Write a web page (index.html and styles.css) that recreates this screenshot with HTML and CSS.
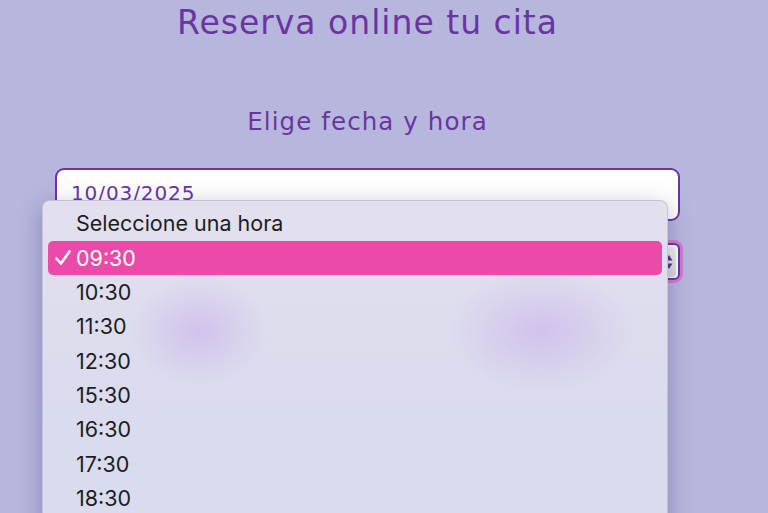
FILE: index.html
```html
<!DOCTYPE html>
<html lang="es">
<head>
<meta charset="utf-8">
<title>Reserva online tu cita</title>
<link rel="stylesheet" href="styles.css">
</head>
<body>
<main class="page">
  <h1 class="title">Reserva online tu cita</h1>
  <h2 class="subtitle">Elige fecha y hora</h2>
  <form class="form">
    <div class="field date-field">10/03/2025</div>
    <div class="field select-field">
      <span class="select-value">09:30</span>
      <span class="stepper">
        <svg width="8" height="18" viewBox="0 0 8 18"><path d="M4 2 L7.5 7.5 H0.5 Z" fill="#5a2e90"/><path d="M4 16 L7.5 10.5 H0.5 Z" fill="#5a2e90"/></svg>
      </span>
    </div>
  </form>
  <div class="menu">
    <div class="option">Seleccione una hora</div>
    <div class="option selected">
      <svg class="check" width="18" height="18" viewBox="0 0 18 18"><path d="M2.5 9.5 L7 14.5 L15.5 2.5" fill="none" stroke="#fff" stroke-width="2.6" stroke-linecap="round" stroke-linejoin="round"/></svg>09:30</div>
    <div class="option">10:30</div>
    <div class="option">11:30</div>
    <div class="option">12:30</div>
    <div class="option">15:30</div>
    <div class="option">16:30</div>
    <div class="option">17:30</div>
    <div class="option">18:30</div>
  </div>
</main>
</body>
</html>
```
FILE: styles.css
```css
html, body {
  margin: 0;
  padding: 0;
  height: 100%;
  overflow: hidden;
}
body {
  background: #b7b7de;
  font-family: "DejaVu Sans", "Open Sans", sans-serif;
  color: #6a35a1;
}
.page {
  position: relative;
  width: 735px;
  height: 513px;
}
.title {
  margin: 0;
  font-weight: 400;
  font-size: 33px;
  line-height: 46px;
  letter-spacing: 1px;
  text-align: center;
  color: #6a35a1;
}
.subtitle {
  margin: 54px 0 0;
  font-weight: 400;
  font-size: 24.5px;
  line-height: 44px;
  letter-spacing: 1.1px;
  text-align: center;
  color: #6a35a1;
}
.form {
  display: flex;
  flex-direction: column;
  gap: 22px;
  margin: 24px 55px 0 55px;
}
.field {
  box-sizing: border-box;
  border: 2px solid #6a35a1;
  border-radius: 9px;
  background: #fff;
}
.date-field {
  height: 53px;
  padding: 11px 0 0 14px;
  font-size: 20px;
  line-height: 24px;
  letter-spacing: 0.9px;
  color: #6a35a1;
}
.select-field {
  height: 37px;
  border-radius: 6px;
  box-shadow: 0 0 0 3px rgba(226, 100, 200, 0.75);
  display: flex;
  align-items: center;
  justify-content: space-between;
  padding: 0 2px 0 14px;
  font-size: 18px;
  color: #222;
}
.stepper {
  display: flex;
  align-items: center;
  justify-content: center;
  width: 14px;
  height: 30px;
  border-radius: 4px;
  background: linear-gradient(#f4f4f4, #d8d8d8);
}
.menu {
  position: absolute;
  left: 42px;
  top: 200px;
  width: 626px;
  height: 340px;
  box-sizing: border-box;
  padding: 5px 5px 0;
  border: 1px solid rgba(120, 120, 150, 0.25);
  border-radius: 8px;
  background:
    radial-gradient(ellipse 70px 55px at 156px 130px, rgba(205, 185, 235, 0.75), rgba(205, 185, 235, 0) 100%),
    radial-gradient(ellipse 95px 62px at 498px 130px, rgba(205, 185, 235, 0.75), rgba(205, 185, 235, 0) 100%),
    linear-gradient(#e3e0ee, #dadbee 60%, #d9dcee);
  box-shadow: 0 6px 24px rgba(60, 50, 110, 0.35);
  font-family: Inter, "Liberation Sans", sans-serif;
  font-size: 21.5px;
  color: #1d1d1f;
}
.option {
  height: 34.4px;
  line-height: 34.4px;
  padding-left: 28px;
  position: relative;
  border-radius: 5px;
}
.option.selected {
  height: 34px;
  margin: 1px 0 -0.6px;
  background: #eb4aa8;
  color: #fff;
}
.check {
  position: absolute;
  left: 6px;
  top: 8px;
}
```
